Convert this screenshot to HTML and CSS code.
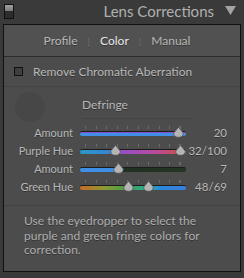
FILE: index.html
```html
<!DOCTYPE html>
<html lang="en">
<head>
    <meta charset="UTF-8">
    <title>Lens Corrections</title>
    <link rel="stylesheet" href="styles.css">
</head>
<body>
    <div class="header">
        <div class="switch"><span class="switch-on"></span></div>
        <div class="title">Lens Corrections</div>
        <svg class="arrow" width="11" height="9" viewBox="0 0 11 9"><polygon points="0,0 11,0 5.5,9" fill="#a3a3a3"/></svg>
    </div>

    <div class="panel">
        <div class="tabs">
            <span class="tab">Profile</span>
            <span class="sep">|</span>
            <span class="tab active">Color</span>
            <span class="sep">|</span>
            <span class="tab">Manual</span>
        </div>

        <div class="check-row">
            <span class="checkbox"></span>
            <span class="check-label">Remove Chromatic Aberration</span>
        </div>

        <div class="defringe">
            <div class="dropper"></div>
            <div class="defringe-title">Defringe</div>
        </div>

        <div class="sliders">
            <div class="slider-row">
                <div class="label">Amount</div>
                <div class="track-wrap">
                    <div class="track amount-purple"></div>
                    <svg class="thumb" style="left: 93px" width="11" height="11" viewBox="0 0 11 11"><path d="M5.5 0.3 L10.3 6 Q10.3 10.3 5.5 10.3 Q0.7 10.3 0.7 6 Z" fill="#b4b4b4" stroke="#555" stroke-width="0.8"/></svg>
                </div>
                <div class="value">20</div>
            </div>
            <div class="slider-row">
                <div class="label">Purple Hue</div>
                <div class="track-wrap">
                    <div class="track hue-purple"></div>
                    <svg class="thumb" style="left: 30px" width="11" height="11" viewBox="0 0 11 11"><path d="M5.5 0.3 L10.3 6 Q10.3 10.3 5.5 10.3 Q0.7 10.3 0.7 6 Z" fill="#b4b4b4" stroke="#555" stroke-width="0.8"/></svg>
                    <svg class="thumb" style="left: 95px" width="11" height="11" viewBox="0 0 11 11"><path d="M5.5 0.3 L10.3 6 Q10.3 10.3 5.5 10.3 Q0.7 10.3 0.7 6 Z" fill="#b4b4b4" stroke="#555" stroke-width="0.8"/></svg>
                </div>
                <div class="value">32/100</div>
            </div>
            <div class="slider-row">
                <div class="label">Amount</div>
                <div class="track-wrap">
                    <div class="track amount-green"></div>
                    <svg class="thumb" style="left: 33px" width="11" height="11" viewBox="0 0 11 11"><path d="M5.5 0.3 L10.3 6 Q10.3 10.3 5.5 10.3 Q0.7 10.3 0.7 6 Z" fill="#b4b4b4" stroke="#555" stroke-width="0.8"/></svg>
                </div>
                <div class="value">7</div>
            </div>
            <div class="slider-row">
                <div class="label">Green Hue</div>
                <div class="track-wrap">
                    <div class="track hue-green"></div>
                    <svg class="thumb" style="left: 43px" width="11" height="11" viewBox="0 0 11 11"><path d="M5.5 0.3 L10.3 6 Q10.3 10.3 5.5 10.3 Q0.7 10.3 0.7 6 Z" fill="#b4b4b4" stroke="#555" stroke-width="0.8"/></svg>
                    <svg class="thumb" style="left: 63px" width="11" height="11" viewBox="0 0 11 11"><path d="M5.5 0.3 L10.3 6 Q10.3 10.3 5.5 10.3 Q0.7 10.3 0.7 6 Z" fill="#b4b4b4" stroke="#555" stroke-width="0.8"/></svg>
                </div>
                <div class="value">48/69</div>
            </div>
        </div>

        <div class="note">
            Use the eyedropper to select the purple and green fringe colors for correction.
        </div>
    </div>
</body>
</html>
```

FILE: styles.css
```css
body {
    margin: 0;
    padding: 0;
    width: 244px;
    height: 278px;
    background-color: #3a3a3a;
    font-family: Lato, "Open Sans", sans-serif;
    color: #b8b8b8;
    overflow: hidden;
}
.header {
    display: flex;
    align-items: center;
    height: 24px;
    padding: 0 8px 0 4px;
}
.switch {
    width: 8px;
    height: 13px;
    border: 1px solid #111;
    background-color: #2c2c2c;
    display: flex;
    flex-direction: column;
    margin-top: -2px;
}
.switch-on {
    height: 6px;
    background: linear-gradient(#a0a0a0, #7a7a7a);
}
.title {
    flex: 1;
    text-align: right;
    font-size: 15px;
    color: #b0b0b0;
    margin-top: -3px;
    padding-right: 11px;
}
.arrow {
    margin-top: -4px;
}
.panel {
    margin: 0 3px;
    height: 246px;
    border: 1px solid #111;
    background-color: #4c4c4c;
    text-shadow: 0 1px 0 rgba(0, 0, 0, 0.35);
}
.tabs {
    display: flex;
    justify-content: center;
    align-items: center;
    gap: 10px;
    height: 31px;
    background-color: #515151;
    border-bottom: 1px solid #2c2c2c;
    font-size: 12px;
    padding-right: 10px;
}
.tab {
    color: #b8b8b8;
}
.tab.active {
    color: #e8e8e8;
}
.sep {
    color: #7a7a7a;
    font-size: 10px;
}
.check-row {
    display: flex;
    align-items: center;
    height: 29px;
    border-bottom: 1px solid #434343;
    font-size: 12px;
}
.checkbox {
    width: 7px;
    height: 7px;
    border: 1px solid #111;
    background-color: #3e3e3e;
    margin: 0 10px 0 10px;
}
.defringe {
    display: flex;
    align-items: flex-start;
    height: 31px;
    padding-top: 5px;
}
.dropper {
    width: 30px;
    height: 30px;
    border-radius: 50%;
    background-color: #474747;
    margin-left: 11px;
}
.defringe-title {
    width: 109px;
    margin-left: 37px;
    padding: 5px 0 6px 0;
    border-bottom: 1px solid #434343;
    font-size: 12px;
}
.sliders {
    border-bottom: 1px solid #434343;
    padding-bottom: 10px;
}
.slider-row {
    display: flex;
    align-items: center;
    height: 18px;
    font-size: 11px;
}
.label {
    width: 69px;
    text-align: right;
}
.track-wrap {
    position: relative;
    width: 106px;
    height: 12px;
    margin-left: 7px;
    background: repeating-linear-gradient(90deg, #6a6a6a 0 1px, transparent 1px 10.5px) 5px 0 / 100% 3px no-repeat;
}
.track {
    position: absolute;
    left: 0;
    right: 0;
    top: 5px;
    height: 4px;
    border-radius: 2px;
    border-top: 1px solid #1c1c1c;
}
.amount-purple {
    background: linear-gradient(#8a4ec8 0 1px, #3f8fe6 1px);
}
.hue-purple {
    background: linear-gradient(90deg, #2a9ac4 0, #3a7ed8 35px, #9450c4 40px, #b44aa8 70px, #d2503a 100%);
}
.amount-green {
    background: linear-gradient(90deg, #3f8fe6 0, #3f8fe6 38px, #203020 38px, #243624 100%);
}
.hue-green {
    background: linear-gradient(90deg, #c86a2a 0, #8a9a30 25px, #3aa050 50px, #2ab0a0 68px, #2a88d8 80px, #3a7ee0 100%);
}
.thumb {
    position: absolute;
    top: 1px;
}
.value {
    flex: 1;
    text-align: right;
    padding-right: 13px;
    font-size: 11.5px;
}
.note {
    padding: 8px 20px 0 20px;
    font-size: 12px;
    line-height: 14.5px;
    color: #adadad;
}
```
